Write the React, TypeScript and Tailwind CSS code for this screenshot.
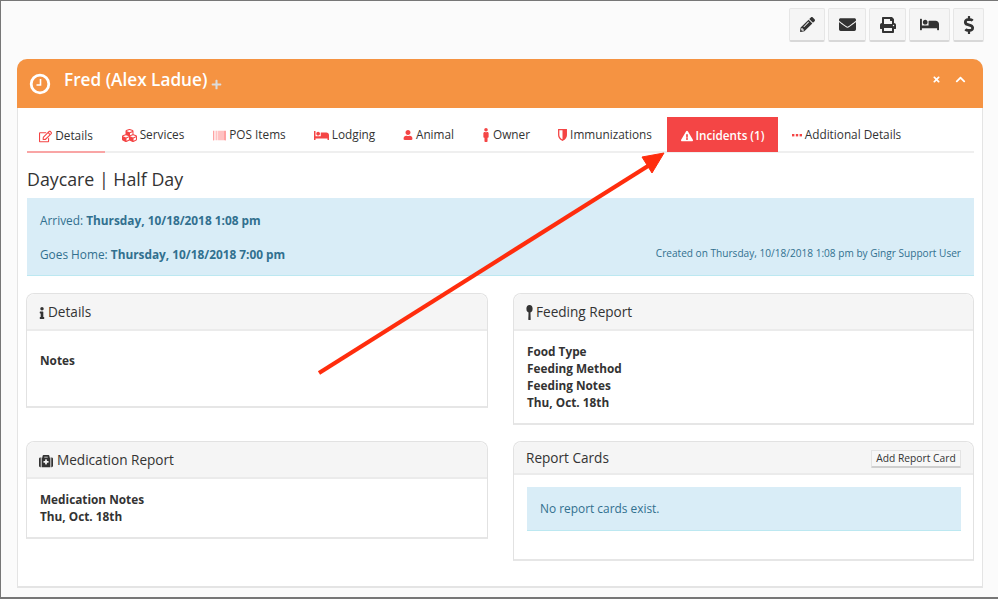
import React from "react";
import { FaPencilAlt, FaEnvelope, FaPrint, FaBed, FaDollarSign, FaTimes, FaChevronUp, FaPlus, FaRegEdit, FaCubes, FaBarcode, FaUser, FaMale, FaExclamationTriangle, FaInfo, FaMedkit } from "react-icons/fa";

const font = { fontFamily: '"Open Sans", sans-serif' };

function ToolBtn({ w, children }: { w: string; children: React.ReactNode }) {
  return (
    <div className={`${w} h-[34px] flex items-center justify-center bg-[#f5f5f5] border border-[#e6e6e6] border-b-2 border-b-[#d8d8d8] rounded-[2px] text-[#333]`}>
      {children}
    </div>
  );
}

function Tab({ w, icon, label, active, hot }: { w: string; icon: React.ReactNode; label: string; active?: boolean; hot?: boolean }) {
  const base = `${w} shrink-0 flex items-center justify-center gap-[3px] whitespace-nowrap`;
  if (hot) {
    return <div className={`${base} h-[35px] text-[11.7px] -mb-[1px] -mr-[1px] pt-[3px] bg-[#f44545] text-white font-semibold`}><span className="text-[12px]">{icon}</span>{label}</div>;
  }
  return (
    <div className={`${base} h-[35px] pt-[3px] text-[11.8px] text-[#333] ${active ? "border-b-2 border-b-[#f9a5a5] -mb-[2px] mr-[1px]" : ""}`}>
      <span className="text-[#f44545] text-[13px]">{icon}</span>{label}
    </div>
  );
}

function Spoon() {
  return (
    <svg width="7" height="15" viewBox="0 0 7 15" fill="#333"><ellipse cx="3.5" cy="3.8" rx="3.1" ry="3.8" /><path d="M2.6 6h1.8l.3 8.2a1.2 1.2 0 0 1-2.4 0z" /></svg>
  );
}

function Dots() {
  return (
    <svg width="10" height="3" viewBox="0 0 10 3" fill="#f44545" className="block"><rect x="0" y="0" width="2.4" height="2.4" /><rect x="3.8" y="0" width="2.4" height="2.4" /><rect x="7.6" y="0" width="2.4" height="2.4" /></svg>
  );
}

function HalfShield() {
  return (
    <svg width="9" height="12" viewBox="0 0 9 12" className="block">
      <path d="M.7.7h7.6v5.2c0 2.6-2 4.3-3.8 5.4C2.7 10.200.7 8.500.7 5.900z" fill="none" stroke="#f44545" strokeWidth="1.300" />
      <path d="M4.500.7h3.800v5.200c0 2.600-2 4.300-3.800 5.400z" fill="#f44545" />
    </svg>
  );
}

function Panel({ title, icon, cls, headH, action, children }: { title: string; icon?: React.ReactNode; cls: string; headH: string; action?: React.ReactNode; children: React.ReactNode }) {
  return (
    <div className={`${cls} bg-white border border-[#e2e2e2] border-b-2 border-b-[#e6e6e6] rounded-t-[8px]`}>
      <div className={`${headH} bg-[#f5f5f5] border-b-2 border-b-[#ebebeb] rounded-t-[8px] pt-[2px] px-[12px] flex items-center gap-[3px] text-[13.6px] text-[#333]`}>
        {icon}
        <span>{title}</span>
        {action && <div className="ml-auto">{action}</div>}
      </div>
      {children}
    </div>
  );
}

export default function App() {
  return (
    <div style={font} className="relative w-[998px] h-[599px] overflow-hidden bg-[#fbfbfb] border border-[#777] border-r-0 border-b-2 flex flex-col">
      <div className="flex justify-end gap-[3px] pt-[7px] pr-[14px] h-[58px]">
        <ToolBtn w="w-[36px]"><FaPencilAlt className="text-[15px]" /></ToolBtn>
        <ToolBtn w="w-[38px]"><FaEnvelope className="text-[17px]" /></ToolBtn>
        <ToolBtn w="w-[37px]"><FaPrint className="text-[16px]" /></ToolBtn>
        <ToolBtn w="w-[41px]"><FaBed className="text-[19px]" /></ToolBtn>
        <ToolBtn w="w-[31px]"><FaDollarSign className="text-[18px]" /></ToolBtn>
      </div>
      <div className="ml-[16px] w-[966px] h-[529px] bg-white border border-[#e4e4e4] border-t-0 border-b-2 rounded-t-[10px] flex flex-col">
        <div className="h-[49px] -mx-[1px] bg-[#f59342] rounded-t-[10px] flex items-center text-white pl-[12px] pr-[17px]">
          <svg width="22" height="22" viewBox="0 0 22 22" fill="none" stroke="white">
            <circle cx="11" cy="11" r="8.800" strokeWidth="2.800" />
            <path d="M11.500 6v6H7.500" strokeWidth="1.600" />
          </svg>
          <span className="ml-[13px] text-[17.2px] font-semibold -mt-[7px]">Fred (Alex Ladue)</span>
          <FaPlus className="ml-[4px] mt-[1px] text-[11px] text-[#dcdcdc]" />
          <FaTimes className="ml-auto text-[9px] -mt-[8px]" />
          <FaChevronUp className="ml-[14px] text-[11px] -mt-[8px]" />
        </div>
        <div className="flex-1 pl-[9px] pr-[8px] flex flex-col">
          <div className="mt-[9px] h-[36px] flex items-end gap-[2px] border-b-2 border-b-[#efefef]">
            <Tab active w="w-[78px]" icon={<FaRegEdit />} label="Details" />
            <Tab w="w-[90px]" icon={<FaCubes className="text-[15px]" />} label="Services" />
            <Tab w="w-[99px]" icon={<FaBarcode className="text-[#f77]" />} label="POS Items" />
            <Tab w="w-[87px]" icon={<FaBed className="text-[15px]" />} label="Lodging" />
            <Tab w="w-[77px]" icon={<FaUser className="text-[10px]" />} label="Animal" />
            <Tab w="w-[74px]" icon={<FaMale className="w-[8px] h-[14px]" />} label="Owner" />
            <Tab w="w-[120px]" icon={<HalfShield />} label="Immunizations" />
            <Tab hot w="w-[111px]" icon={<FaExclamationTriangle />} label="Incidents (1)" />
            <Tab w="w-[135px]" icon={<Dots />} label="Additional Details" />
          </div>
          <div className="mt-[14px] text-[17.8px] leading-[25px] text-[#333]">Daycare | Half Day</div>
          <div className="mt-[6px] h-[78px] bg-[#d9edf7] border-b border-b-[#bce8f1] px-[13px] text-[11.85px] text-[#31708f] flex flex-col">
            <div className="mt-[13px] leading-[18px]">Arrived: <b>Thursday, 10/18/2018 1:08 pm</b></div>
            <div className="mt-[16px] leading-[18px] flex items-center justify-between">
              <span>Goes Home: <b>Thursday, 10/18/2018 7:00 pm</b></span>
              <span className="text-[10.1px] -mt-[2px]">Created on Thursday, 10/18/2018 1:08 pm by Gingr Support User</span>
            </div>
          </div>
          <div className="mt-[17px] flex justify-between">
            <Panel cls="h-[115px] w-[462px] -ml-[1px]" headH="h-[37px]" title="Details" icon={<FaInfo className="w-[6px] h-[12px] text-[#333]" />}>
              <div className="px-[13px] pt-[21px] text-[11.8px] leading-[17px] font-bold text-[#333]">Notes</div>
            </Panel>
            <Panel cls="h-[132px] w-[461px]" headH="h-[37px]" title="Feeding Report" icon={<Spoon />}>
              <div className="px-[13px] pt-[12px] text-[11.8px] leading-[17px] font-bold text-[#333]">
                <div>Food Type</div><div>Feeding Method</div><div>Feeding Notes</div><div>Thu, Oct. 18th</div>
              </div>
            </Panel>
          </div>
          <div className="mt-[16px] flex justify-between flex-1 items-start">
            <Panel cls="h-[98px] w-[462px] -ml-[1px]" headH="h-[37px]" title="Medication Report" icon={<FaMedkit className="text-[14px] mr-[1px]" />}>
              <div className="px-[13px] pt-[12px] text-[11.8px] leading-[17px] font-bold text-[#333]">
                <div>Medication Notes</div><div>Thu, Oct. 18th</div>
              </div>
            </Panel>
            <Panel cls="h-[120px] w-[461px]" headH="h-[33px]" title="Report Cards" action={
              <div className="h-[18px] bg-[#f7f7f7] border border-[#e3e3e3] border-b-2 border-b-[#cfcfcf] rounded-[1px] text-[10.25px] leading-[15px] text-[#333] w-[90px] text-center whitespace-nowrap">Add Report Card</div>
            }>
              <div className="ml-[13px] mr-[12px] mt-[12px] h-[44px] bg-[#d9edf7] border-b border-b-[#bce8f1] px-[13px] flex items-center text-[11.9px] text-[#31708f]">No report cards exist.</div>
            </Panel>
          </div>
        </div>
      </div>
      <svg className="absolute -left-[1px] -top-[1px] pointer-events-none" width="998" height="599" viewBox="0 0 998 599">
        <path d="M319 373 L648 166" stroke="#ff2d0d" strokeWidth="4.200" />
        <path d="M664 153 L642 157 L652 173 Z" fill="#ff2d0d" stroke="#ff2d0d" strokeWidth="1" />
      </svg>
    </div>
  );
}
